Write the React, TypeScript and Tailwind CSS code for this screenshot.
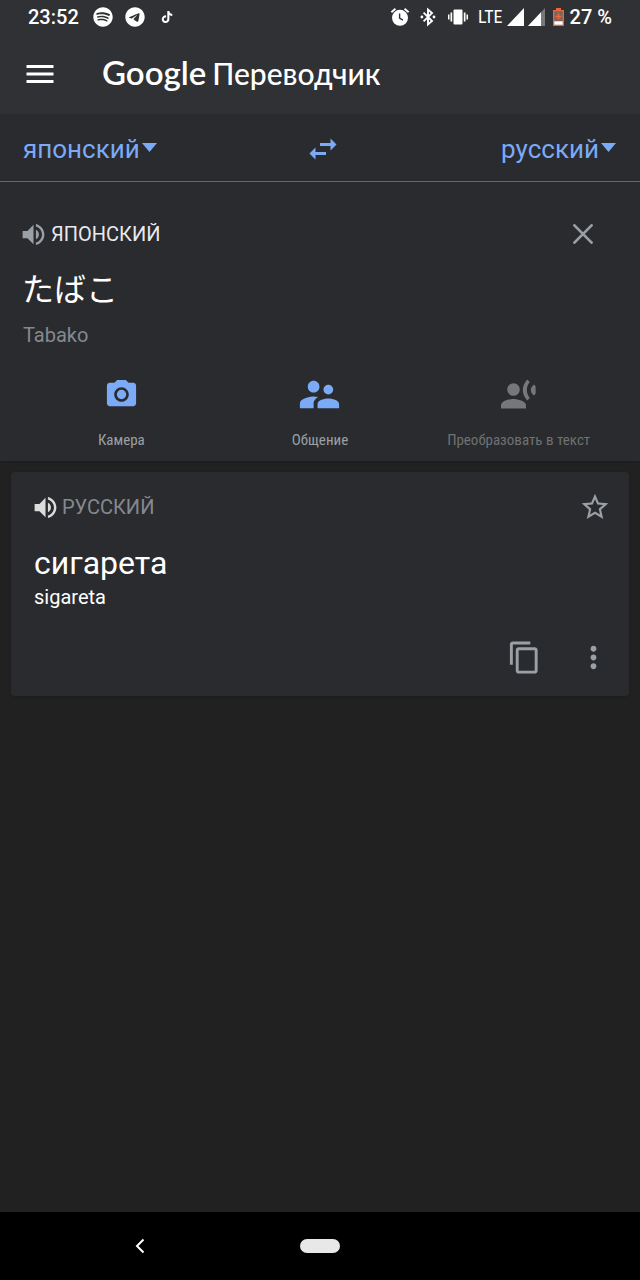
import type { ReactNode } from "react";
import {
  MdContentCopy,
  MdMenu,
  MdMoreVert,
  MdPhotoCamera,
  MdStarBorder,
  MdSupervisorAccount,
  MdSwapHoriz,
  MdVolumeUp,
} from "react-icons/md";
import { FaSpotify, FaTelegram, FaTiktok } from "react-icons/fa6";

function AlarmIcon() {
  return (
    <svg className="h-5 w-5" viewBox="0 0 20 20" fill="none" aria-hidden="true">
      <circle cx="10" cy="10.8" r="8" fill="#fff" />
      <path d="M1.4 5.2 5.4 1.8M18.6 5.2 14.6 1.8" stroke="#fff" strokeWidth="1.9" />
      <path d="M9.6 6.4v4.8l3.4 2" stroke="#303134" strokeWidth="1.4" />
    </svg>
  );
}

function BluetoothIcon() {
  return (
    <svg className="h-5 w-4" viewBox="0 0 16 20" fill="none" aria-hidden="true">
      <path d="M3.6 5.6 12 14 8 17.4V2.6L12 6l-8.4 8.4" stroke="#fff" strokeWidth="1.9" />
      <circle cx="1.9" cy="10" r="1.4" fill="#fff" />
      <circle cx="14" cy="10" r="1.4" fill="#fff" />
    </svg>
  );
}

function VibrateIcon() {
  return (
    <svg className="h-5 w-5" viewBox="0 0 20 20" fill="#fff" aria-hidden="true">
      <rect x="5.5" y="2.5" width="9" height="15" rx="1" />
      <path d="M2.5 5.5h1.7v9H2.5zM15.8 5.5h1.7v9h-1.7zM0 7.5h1.5v5H0zM18.5 7.5H20v5h-1.5z" />
    </svg>
  );
}

function SignalIcon({ weak = false }: { weak?: boolean }) {
  return (
    <svg className="h-[18px] w-[17px]" viewBox="0 0 17 18" aria-hidden="true">
      <path d="M17 0v18H0z" fill={weak ? "#77787a" : "#fff"} />
      {weak && <path d="M13 4.2V18H0z" fill="#fff" />}
    </svg>
  );
}

function BatteryIcon() {
  return (
    <svg className="h-[18px] w-[11px]" viewBox="0 0 11 18" aria-hidden="true">
      <path d="M3 0h5v2h3v16H0V2h3z" fill="#e8643a" />
      <path d="M1.3 3.3h8.4v10H1.3z" fill="#77675f" />
      <path d="M1.3 13.3h8.4v3.4H1.3z" fill="#fff" />
      <path d="M4.8 5.5h1.5v2.3h2.2v1.5H6.3v2.3H4.8V9.3H2.5V7.8h2.3z" fill="#f0673b" />
    </svg>
  );
}

function CloseIcon() {
  return (
    <svg className="size-5" viewBox="0 0 20 20" fill="none" aria-hidden="true">
      <path d="M1.4 1.4 18.6 18.6M18.6 1.4 1.4 18.6" stroke="currentColor" strokeWidth="2.7" strokeLinecap="round" />
    </svg>
  );
}

function SpeakerWavesIcon() {
  return (
    <svg className="h-[30px] w-[35px]" viewBox="0 0 35 30" fill="currentColor" aria-hidden="true">
      <circle cx="12.5" cy="10.5" r="6.3" />
      <path d="M0 29.5v-3.2c0-4.2 8.3-6.3 12.5-6.3S25 22.1 25 26.3v3.2z" />
      <path d="M26.3.5c-6 6.2-6 14.8 0 21l2.5-2.5c-3.9-5-3.9-11.5 0-16z" />
      <path d="M33.1 5.4c-4.4 3.4-4.4 7.7 0 11.2l1.5-2V7.4z" />
    </svg>
  );
}

function CaretIcon() {
  return (
    <svg className="mb-0.5 h-[9px] w-[15px]" viewBox="0 0 15 9" fill="currentColor" aria-hidden="true">
      <path d="M0 0h15L7.5 9z" />
    </svg>
  );
}

function StatusBar() {
  return (
    <div className="flex h-[34px] items-center justify-between px-7 text-xl font-medium text-white">
      <div className="flex items-center">
        <span className="w-[65px]">23:52</span>
        <FaSpotify className="size-5" />
        <FaTelegram className="ml-3 size-5" />
        <FaTiktok className="ml-4 size-3" />
      </div>
      <div className="flex items-center">
        <AlarmIcon />
        <span className="ml-2.5 flex">
          <BluetoothIcon />
        </span>
        <span className="ml-3 flex">
          <VibrateIcon />
        </span>
        <span className="mr-1 ml-2.5 font-[Roboto_Condensed,Roboto,sans-serif] text-lg font-normal">LTE</span>
        <SignalIcon />
        <span className="ml-1 flex">
          <SignalIcon weak />
        </span>
        <span className="mr-1.5 ml-2 flex">
          <BatteryIcon />
        </span>
        <span>27 %</span>
      </div>
    </div>
  );
}

function LanguageButton({ children }: { children: ReactNode }) {
  return (
    <button type="button" className="flex items-center gap-0.5 text-[26px] leading-8">
      {children}
      <CaretIcon />
    </button>
  );
}

function InputMode({ label, icon, disabled = false }: { label: string; icon: ReactNode; disabled?: boolean }) {
  return (
    <button
      type="button"
      disabled={disabled}
      className="group flex flex-col items-center text-[#7baaf7] disabled:text-[#757779]"
    >
      <span className="flex h-12 items-center">{icon}</span>
      <span className="mt-3 font-[Roboto_Condensed,Roboto,sans-serif] text-[15px] leading-5 whitespace-nowrap text-[#9aa0a6] group-disabled:text-[#6f7173]">
        {label}
      </span>
    </button>
  );
}

export default function App() {
  return (
    <div className="flex min-h-screen flex-col bg-[#212121] font-[Roboto,'Noto_Sans_CJK_JP',sans-serif]">
      <header className="bg-[#303134] text-white">
        <StatusBar />
        <div className="flex h-20 items-center pl-[22px]">
          <button type="button" aria-label="Меню">
            <MdMenu className="size-9" />
          </button>
          <h1 className="ml-11 flex items-baseline gap-1.5 pb-1 font-[Lato,sans-serif] text-[30px] leading-10 font-medium">
            <span className="text-[33px] font-semibold">Google</span>
            <span>Переводчик</span>
          </h1>
        </div>
      </header>

      <section className="bg-[#2a2b2e] shadow-sm">
        <div className="grid h-[68px] grid-cols-3 items-center border-b border-[#66676a] pt-0.5 pr-6 pl-[23px] text-[#7baaf7]">
          <LanguageButton>японский</LanguageButton>
          <button type="button" aria-label="Поменять языки" className="justify-self-center pl-2">
            <MdSwapHoriz className="size-9" />
          </button>
          <div className="justify-self-end">
            <LanguageButton>русский</LanguageButton>
          </div>
        </div>

        <div className="flex items-center justify-between pt-9 pr-[47px] pl-[19px]">
          <button type="button" className="flex items-center gap-[3px] text-xl leading-8 text-[#e8eaed]">
            <MdVolumeUp className="size-[29px] text-[#9aa0a6]" />
            ЯПОНСКИЙ
          </button>
          <button type="button" aria-label="Очистить" className="text-[#9aa0a6]">
            <CloseIcon />
          </button>
        </div>
        <p lang="ja" className="mt-4 px-[22px] text-[32px] leading-12 text-white">
          たばこ
        </p>
        <p className="mt-[7px] px-[23px] text-xl leading-7 text-[#85898e]">Tabako</p>

        <div className="mt-[21px] grid grid-cols-3 px-[22px] pb-[11px]">
          <InputMode label="Камера" icon={<MdPhotoCamera className="size-[35px]" />} />
          <InputMode label="Общение" icon={<MdSupervisorAccount className="size-[47px]" />} />
          <InputMode label="Преобразовать в текст" disabled icon={<SpeakerWavesIcon />} />
        </div>
      </section>

      <main className="flex-1 p-[11px]">
        <article className="rounded bg-[#2a2b2e] pt-[19px] pr-[18px] pb-[21px] pl-[23px] shadow-sm">
          <div className="flex items-center justify-between">
            <button type="button" className="-ml-[3px] flex items-center gap-0.5 text-xl leading-8 text-[#85898e]">
              <MdVolumeUp className="size-[29px] text-[#dcdcdc]" />
              РУССКИЙ
            </button>
            <button type="button" aria-label="В избранное" className="text-[#9aa0a6]">
              <MdStarBorder className="size-8" />
            </button>
          </div>
          <p className="mt-5 text-[32px] leading-10 text-white">сигарета</p>
          <p className="text-xl leading-7 text-white">sigareta</p>
          <div className="mt-[29px] flex justify-end gap-[34px] text-[#9aa0a6]">
            <button type="button" aria-label="Копировать">
              <MdContentCopy className="size-[35px]" />
            </button>
            <button type="button" aria-label="Ещё">
              <MdMoreVert className="size-[35px]" />
            </button>
          </div>
        </article>
      </main>

      <nav className="grid h-[68px] grid-cols-[1fr_40px_1fr] items-center bg-black">
        <button type="button" aria-label="Назад" className="justify-self-center pr-5">
          <svg className="h-4 w-[10px]" viewBox="0 0 10 16" fill="none" stroke="#fff" strokeWidth="2" aria-hidden="true">
            <path d="M8.5 1.5 2 8l6.500 6.500" />
          </svg>
        </button>
        <button type="button" aria-label="Домой" className="h-3.5 w-10 rounded-full bg-[#e8e8e8]" />
      </nav>
    </div>
  );
}
